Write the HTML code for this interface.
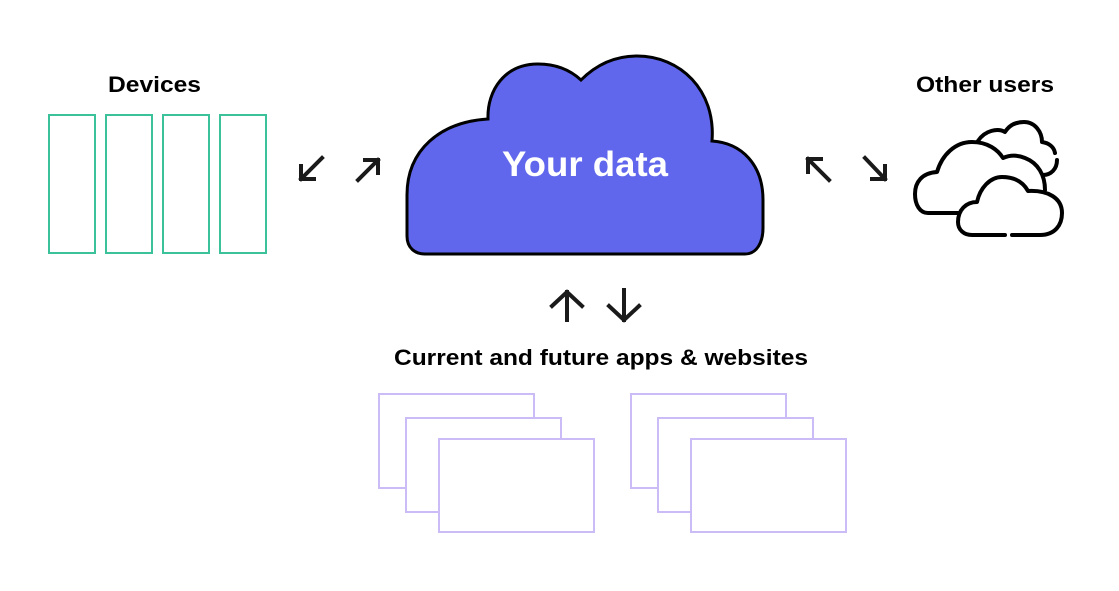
<!DOCTYPE html>
<html><head><meta charset="utf-8"><style>
html,body{margin:0;padding:0;background:#fff;width:1119px;height:591px;overflow:hidden}
svg{display:block}
</style></head><body>
<svg width="1119" height="591" viewBox="0 0 1119 591" xmlns="http://www.w3.org/2000/svg">
<g font-family="Liberation Sans, sans-serif" font-weight="bold" fill="#000">
<text x="108" y="92" font-size="22" textLength="93" lengthAdjust="spacingAndGlyphs">Devices</text>
<text x="916" y="92" font-size="22" textLength="138" lengthAdjust="spacingAndGlyphs">Other users</text>
<text x="394" y="365" font-size="22" textLength="414" lengthAdjust="spacingAndGlyphs">Current and future apps &amp; websites</text>
</g>
<g fill="none" stroke="#3cc29b" stroke-width="2">
<rect x="49" y="115" width="46" height="138"/>
<rect x="106" y="115" width="46" height="138"/>
<rect x="163" y="115" width="46" height="138"/>
<rect x="220" y="115" width="46" height="138"/>
</g>
<path d="M425,254 L745,254 C757,254 763,242 763,228 L763,200 C763,165 742,143 712,141 C716,90 680,56 637,56 C613,56 595,66 581,80 C568,68 553,64 538,64 C505,64 487,90 488,119 C440,122 407,150 407,195 L407,236 C407,248 415,254 425,254 Z" fill="#6067ec" stroke="#000" stroke-width="3"/>
<text x="502" y="176" font-family="Liberation Sans, sans-serif" font-weight="bold" font-size="35" fill="#fff" textLength="166" lengthAdjust="spacingAndGlyphs">Your data</text>
<g fill="none" stroke="#1a1a1a" stroke-width="4" stroke-linecap="square">
<path d="M322,158 L301,179 M301,166 L301,179 L314,179"/>
<path d="M358,180 L378,160 M365,160 L378,160 L378,173"/>
<path d="M829,180 L808,159 M808,172 L808,159 L821,159"/>
<path d="M865,158 L885,179 M872,179 L885,179 L885,166"/>
<path d="M567,320 L567,292 M552,306 L567,292 L582,306"/>
<path d="M624,290 L624,320 M609,306 L624,320 L639,306"/>
</g>
<g stroke="#000" stroke-width="4" stroke-linecap="round" stroke-linejoin="round">
<path d="M978,141 C985,130 998,128 1005,132 C1010,124 1017,122 1024,122 C1035,122 1042,132 1042,142 C1049,143 1054,147 1055,153 M1057,160 C1057,169 1051,175 1043,175" fill="#fff"/>
<path d="M958,213 L928,213 C920,213 915,205 915,194 C915,182 922,173 937,172 C942,155 955,142 972,142 C988,142 998,150 1003,158 C1010,155 1018,155 1025,158 C1038,163 1045,175 1045,190" fill="#fff"/>
<path d="M972,235 L1040,235 C1055,235 1062,225 1062,213 C1062,198 1048,190 1028,191 C1022,180 1012,177 1002,177 C990,177 980,188 977,202 C966,202 958,210 958,222 C958,230 964,235 972,235 Z" fill="#fff" stroke="none"/>
<path d="M1012,235 L1040,235 C1055,235 1062,225 1062,213 C1062,198 1048,190 1028,191 C1022,180 1012,177 1002,177 C990,177 980,188 977,202 C966,202 958,210 958,222 C958,230 964,235 972,235 L1005,235" fill="none"/>
</g>
<g fill="#fff" stroke="#cbbcf8" stroke-width="2">
<rect x="379" y="394" width="155" height="94"/>
<rect x="406" y="418" width="155" height="94"/>
<rect x="439" y="439" width="155" height="93"/>
<rect x="631" y="394" width="155" height="94"/>
<rect x="658" y="418" width="155" height="94"/>
<rect x="691" y="439" width="155" height="93"/>
</g>
</svg>
</body></html>
